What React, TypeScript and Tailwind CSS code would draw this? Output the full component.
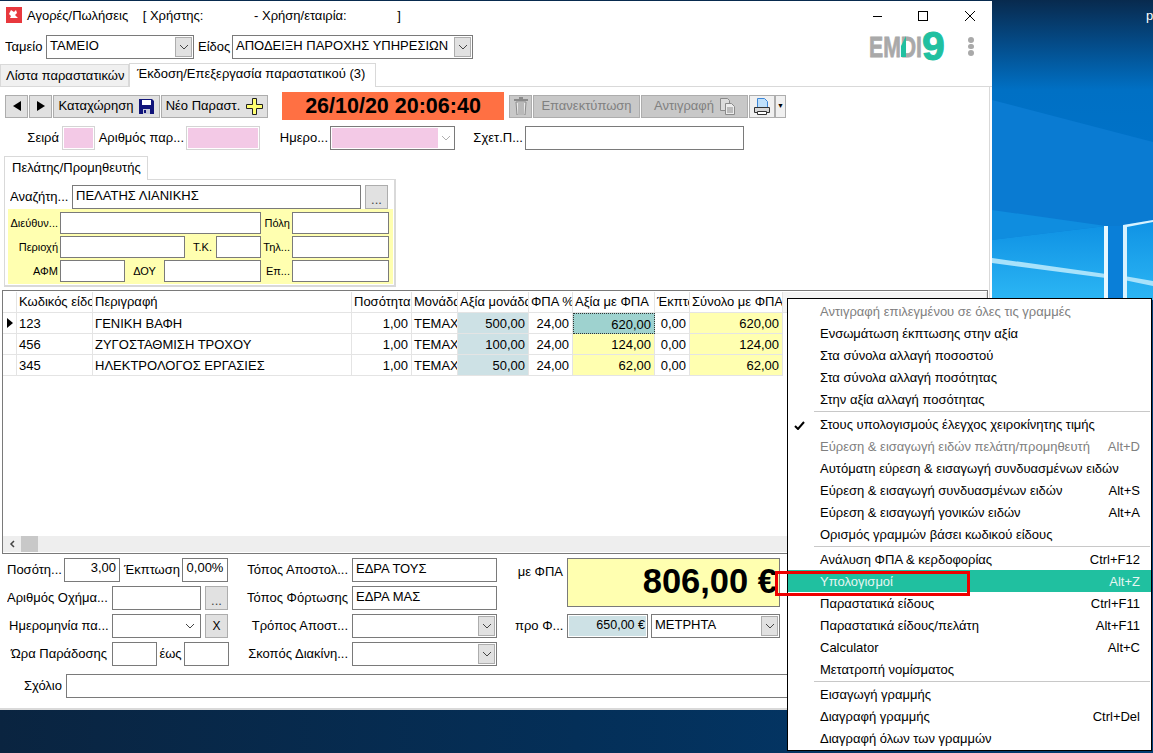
import type { ReactNode } from "react";
import clsx from "clsx";

const Wallpaper = () => (
  <svg className="absolute inset-0" width="1153" height="753" viewBox="0 0 1153 753">
    <defs>
      <linearGradient id="sky" x1="0" y1="0" x2="0" y2="1">
        <stop offset="0" stopColor="#082a4e" />
        <stop offset="0.14" stopColor="#044a86" />
        <stop offset="0.3" stopColor="#0070c4" />
        <stop offset="1" stopColor="#0078d4" />
      </linearGradient>
      <linearGradient id="pane" x1="0" y1="0" x2="0" y2="1">
        <stop offset="0" stopColor="#0f92e4" />
        <stop offset="1" stopColor="#2cb6f4" />
      </linearGradient>
      <linearGradient id="floor" x1="0" y1="0" x2="1" y2="0">
        <stop offset="0" stopColor="#0a2440" />
        <stop offset="0.5" stopColor="#042f58" />
        <stop offset="1" stopColor="#023d73" />
      </linearGradient>
    </defs>
    <rect width="1153" height="300" fill="url(#sky)" />
    <polygon points="992,100 1153,142 1153,300 992,300" fill="#0a7bd2" />
    <polygon points="992,210 1106,226 992,240" fill="#0f8ddf" />
    <polygon points="992,240 1106,226 1106,300 992,300" fill="url(#pane)" />
    <polygon points="1124,225 1153,220 1153,300 1124,300" fill="url(#pane)" />
    <polygon points="1106,300 1124,300 1124,226 1106,226" fill="#0a7fd8" />
    <polygon points="992,258 1106,274 1106,278 992,263" fill="#a8e2fb" />
    <polygon points="1124,276 1153,281 1153,286 1124,280" fill="#a8e2fb" />
    <rect x="1104" y="226" width="4" height="74" fill="#e8f8ff" />
    <polygon points="1123,225 1153,220 1153,222 1127,227 1127,300 1123,300" fill="#d7f2ff" />
    <rect y="300" width="1153" height="453" fill="url(#floor)" />
  </svg>
);

const Chevron = ({ color = "#444" }: { color?: string }) => (
  <svg width="10" height="6" viewBox="0 0 10 6" fill="none">
    <path d="M1 1l4 4 4-4" stroke={color} strokeWidth="1" />
  </svg>
);

const Field = ({ className, children }: { className?: string; children?: ReactNode }) => (
  <div
    className={clsx(
      "shrink-0 border border-[#7a7a7a] bg-white px-[3px] whitespace-nowrap overflow-hidden",
      className
    )}
  >
    {children}
  </div>
);

const Combo = ({ className, text, flat }: { className?: string; text?: string; flat?: boolean }) => (
  <div className={clsx("shrink-0 flex items-stretch border border-[#7a7a7a] bg-white h-[24px]", className)}>
    <span className="flex-1 px-[3px] leading-[20px] whitespace-nowrap overflow-hidden">{text}</span>
    {flat ? (
      <span className="w-[20px] flex items-center justify-center">
        <Chevron />
      </span>
    ) : (
      <span className="w-[17px] m-[1px] flex items-center justify-center bg-[#e1e1e1] border border-[#adadad]">
        <Chevron />
      </span>
    )}
  </div>
);

const Label = ({ className, children }: { className?: string; children: ReactNode }) => (
  <span className={clsx("shrink-0 whitespace-nowrap overflow-hidden", className)}>{children}</span>
);

const Dots = ({ className }: { className?: string }) => (
  <div
    className={clsx(
      "shrink-0 w-[23px] h-[24px] bg-[#e1e1e1] border border-[#adadad] flex items-end justify-center leading-[16px] text-[#444]",
      className
    )}
  >
    ...
  </div>
);

const Pink = ({ className }: { className?: string }) => (
  <div className={clsx("shrink-0 h-[24px] border border-[#d4d4d4] bg-white p-[1px]", className)}>
    <div className="h-full bg-[#f3c9e6]" />
  </div>
);

const ToolButton = ({ className, children }: { className?: string; children: ReactNode }) => (
  <div
    className={clsx(
      "shrink-0 h-[23px] border border-[#adadad] bg-[#e1e1e1] flex items-center justify-center whitespace-nowrap",
      className
    )}
  >
    {children}
  </div>
);

const Floppy = () => (
  <svg width="17" height="17" viewBox="0 0 17 17" className="ml-[4px]">
    <path d="M1 1h13l2 2v13H1z" fill="#10147a" />
    <rect x="4" y="2" width="9" height="5" fill="#fff" />
    <rect x="5" y="11" width="7" height="5" fill="#c6c8d8" />
    <rect x="6" y="12" width="2" height="3" fill="#10147a" />
  </svg>
);

const Plus = () => (
  <svg width="17" height="17" viewBox="0 0 17 17" className="ml-[6px]">
    <path d="M6.5.5h4v6h6v4h-6v6h-4v-6h-6v-4h6z" fill="#ffff70" stroke="#222" strokeWidth="1" />
  </svg>
);

const Triangle = ({ flip }: { flip?: boolean }) => (
  <svg width="8" height="10" viewBox="0 0 8 10" className={flip ? "rotate-180" : undefined}>
    <path d="M0 5l8-5v10z" fill="#000" />
  </svg>
);

const Trash = () => (
  <svg width="14" height="18" viewBox="0 0 14 18">
    <rect x="0" y="2" width="14" height="2" fill="#8a8a8a" />
    <rect x="5" y="0" width="4" height="2" fill="#8a8a8a" />
    <path d="M2 5h10l-1 13H3z" fill="#e8e8e8" stroke="#8a8a8a" />
    <path d="M5 6v11M7 6v11M9 6v11" stroke="#8a8a8a" />
  </svg>
);

const CopyIcon = () => (
  <svg width="15" height="17" viewBox="0 0 15 17" className="ml-[6px]" fill="#dcdcdc" stroke="#8a8a8a">
    <path d="M.5.5h7l2 2v10h-9z" />
    <path d="M5.5 5.5h6l3 3v8h-9z" fill="#ececec" />
    <path d="M7 10h6M7 12h6M7 14h6" />
  </svg>
);

const Printer = () => (
  <svg width="18" height="19" viewBox="0 0 18 19">
    <path d="M4.5 1.5h7l3 3v7h-10z" fill="#bfe0fb" stroke="#3d86d6" />
    <path d="M1.5 10.5h15v5h-15z" fill="#d8d8d8" stroke="#333" />
    <path d="M4.5 14.5h9v3h-9z" fill="#fff" stroke="#333" />
  </svg>
);

const Logo = () => (
  <svg width="80" height="30" viewBox="0 0 80 30" className="ml-[7px]" role="img" aria-label="EMDI9">
    <text
      x="0"
      y="26"
      fontFamily="'Liberation Sans', sans-serif"
      fontWeight="700"
      fontSize="29"
      fill="#a9a9a9"
      stroke="#a9a9a9"
      strokeWidth="0.8"
      textLength="53"
      lengthAdjust="spacingAndGlyphs"
    >
      EMDI
    </text>
    <polygon points="32,15 37,5 37,26 32,26" fill="#20c0a0" />
    <text
      x="53"
      y="29"
      fontFamily="'Liberation Sans', sans-serif"
      fontWeight="700"
      fontSize="41"
      fill="#20c0a0"
      stroke="#20c0a0"
      strokeWidth="1"
    >
      9
    </text>
  </svg>
);

const columns = "grid-cols-[14px_76px_259px_60px_46px_71px_44px_82px_35px_93px_1fr]";
const headers = [
  "",
  "Κωδικός είδους",
  "Περιγραφή",
  "Ποσότητα",
  "Μονάδα",
  "Αξία μονάδας",
  "ΦΠΑ %",
  "Αξία με ΦΠΑ",
  "Έκπτωση",
  "Σύνολο με ΦΠΑ",
  "",
];
const rows = [
  ["123", "ΓΕΝΙΚΗ ΒΑΦΗ", "1,00", "ΤΕΜΑΧ", "500,00", "24,00", "620,00", "0,00", "620,00"],
  ["456", "ΖΥΓΟΣΤΑΘΜΙΣΗ ΤΡΟΧΟΥ", "1,00", "ΤΕΜΑΧ", "100,00", "24,00", "124,00", "0,00", "124,00"],
  ["345", "ΗΛΕΚΤΡΟΛΟΓΟΣ ΕΡΓΑΣΙΕΣ", "1,00", "ΤΕΜΑΧ", "50,00", "24,00", "62,00", "0,00", "62,00"],
];

const cell = "h-[21px] border-r border-b border-[#e4e4e4] pl-[2px] pr-[3px] whitespace-nowrap overflow-hidden";

const menuGroups: { text: string; keys?: string; off?: boolean; check?: boolean; active?: boolean }[][] = [
  [
    { text: "Αντιγραφή επιλεγμένου σε όλες τις γραμμές", off: true },
    { text: "Ενσωμάτωση έκπτωσης στην αξία" },
    { text: "Στα σύνολα αλλαγή ποσοστού" },
    { text: "Στα σύνολα αλλαγή ποσότητας" },
    { text: "Στην αξία αλλαγή ποσότητας" },
  ],
  [
    { text: "Στους υπολογισμούς έλεγχος χειροκίνητης τιμής", check: true },
    { text: "Εύρεση & εισαγωγή ειδών πελάτη/προμηθευτή", keys: "Alt+D", off: true },
    { text: "Αυτόματη εύρεση & εισαγωγή συνδυασμένων ειδών" },
    { text: "Εύρεση & εισαγωγή συνδυασμένων ειδών", keys: "Alt+S" },
    { text: "Εύρεση & εισαγωγή γονικών ειδών", keys: "Alt+A" },
    { text: "Ορισμός γραμμών βάσει κωδικού είδους" },
  ],
  [
    { text: "Ανάλυση ΦΠΑ & κερδοφορίας", keys: "Ctrl+F12" },
    { text: "Υπολογισμοί", keys: "Alt+Z", active: true },
    { text: "Παραστατικά είδους", keys: "Ctrl+F11" },
    { text: "Παραστατικά είδους/πελάτη", keys: "Alt+F11" },
    { text: "Calculator", keys: "Alt+C" },
    { text: "Μετατροπή νομίσματος" },
  ],
  [
    { text: "Εισαγωγή γραμμής" },
    { text: "Διαγραφή γραμμής", keys: "Ctrl+Del" },
    { text: "Διαγραφή όλων των γραμμών" },
  ],
];

const ContextMenu = () => (
  <div className="absolute left-[787px] top-[298px] w-[365px] h-[453px] bg-white border border-black pt-[1px] text-[13px]">
    {menuGroups.map((group, i) => (
      <div key={i}>
        {i > 0 && (
          <div className="h-[3px] pt-[1px] ml-[26px] mr-[1px]">
            <div className="h-[1px] bg-[#c8c8c8]" />
          </div>
        )}
        {group.map((item) => (
          <div
            key={item.text}
            className={clsx(
              "h-[22px] flex items-center pt-[2px] pr-[11px]",
              item.off && "text-[#808080]",
              item.active && "bg-[#20c0a0] text-[#e6f6f1]"
            )}
          >
            <span className="w-[32px] shrink-0 flex justify-center pr-[9px]">
              {item.check && (
                <svg width="11" height="9" viewBox="0 0 11 9" fill="none">
                  <path d="M1 5l3 3 6-7" stroke="#000" strokeWidth="2" />
                </svg>
              )}
            </span>
            <span className="flex-1 whitespace-nowrap">{item.text}</span>
            {item.keys && <span>{item.keys}</span>}
          </div>
        ))}
      </div>
    ))}
  </div>
);

export default function App() {
  return (
    <div className="relative w-[1153px] h-[753px] overflow-hidden text-[13px] text-black [font-family:'Liberation_Sans',sans-serif]">
      <Wallpaper />
      <span className="absolute left-[1146px] top-[6px] text-white text-[13px]">p</span>

      <div className="absolute left-0 top-[1px] w-[992px] h-[709px] bg-white flex flex-col">
        {/* title + cash desk row */}
        <div className="flex justify-between h-[62px] shrink-0">
          <div>
            <div className="h-[34px] flex items-start pt-[6px] pl-[6px]">
              <svg width="16" height="16" viewBox="0 0 16 16">
                <rect width="16" height="16" fill="#e8383d" />
                <path d="M5 3l3 2 2-2 1 3-2 2 3 3H4l1-2-2-2z" fill="#fff" />
              </svg>
              <span className="ml-[5px] leading-[18px] whitespace-pre">
                {"Αγορές/Πωλήσεις    [ Χρήστης:              - Χρήση/εταιρία:              ]"}
              </span>
            </div>
            <div className="flex items-center pl-[5px]">
              <Label className="w-[41px]">Ταμείο</Label>
              <Combo className="w-[148px]" text="ΤΑΜΕΙΟ" />
              <Label className="w-[38px] pl-[4px]">Είδος</Label>
              <Combo className="w-[241px]" text="ΑΠΟΔΕΙΞΗ ΠΑΡΟΧΗΣ ΥΠΗΡΕΣΙΩΝ" />
            </div>
          </div>
          <div className="w-[130px]">
            <div className="h-[30px] flex items-center pl-[11px] gap-[29px]">
              <div className="w-[9px] h-[1px] bg-black" />
              <div className="w-[10px] h-[10px] border border-black ml-[7px]" />
              <svg width="12" height="12" viewBox="0 0 12 12" className="ml-[7px]">
                <path d="M1 1l10 10M11 1L1 11" stroke="#000" />
              </svg>
            </div>
            <div className="flex items-start">
              <Logo />
              <div className="ml-[19px] mt-[6px] flex flex-col gap-[1px]">
                {[0, 1, 2].map((d) => (
                  <div key={d} className="w-[5.5px] h-[5.5px] rounded-full bg-[#a9a9a9]" />
                ))}
              </div>
            </div>
          </div>
        </div>

        {/* tabs */}
        <div className="flex items-end h-[24px] shrink-0 border-b border-[#d9d9d9]">
          <div className="w-[129px] h-[22px] bg-[#f0f0f0] border border-b-0 border-[#d9d9d9] pl-[5px] leading-[22px] whitespace-nowrap">
            Λίστα παραστατικών
          </div>
          <div className="w-[247px] h-[24px] -mb-[1px] bg-white border border-b-0 border-[#d9d9d9] pl-[7px] leading-[20px] whitespace-nowrap">
            Έκδοση/Επεξεργασία παραστατικού (3)
          </div>
        </div>

        {/* tab page */}
        <div className="w-[990px] flex-1 border-r border-b-2 border-[#d9d9d9] flex flex-col">
          <div className="flex items-center h-[28px] mt-[5px] pl-[5px] shrink-0">
            <ToolButton className="w-[23px]">
              <Triangle />
            </ToolButton>
            <ToolButton className="w-[23px] ml-[1px]">
              <Triangle flip />
            </ToolButton>
            <ToolButton className="w-[107px] ml-[1px]">
              Καταχώρηση
              <Floppy />
            </ToolButton>
            <ToolButton className="w-[107px] ml-[1px]">
              Νέο Παραστ.
              <Plus />
            </ToolButton>
            <div className="w-[222px] h-[28px] ml-[14px] bg-[#ff7043] flex items-center justify-center font-bold text-[21.5px] whitespace-nowrap">
              26/10/20 20:06:40
            </div>
            <ToolButton className="w-[23px] ml-[5px] !bg-[#c8c8c8]">
              <Trash />
            </ToolButton>
            <ToolButton className="w-[107px] ml-[1px] !bg-[#c8c8c8] text-[#808080]">Επανεκτύπωση</ToolButton>
            <ToolButton className="w-[107px] ml-[1px] !bg-[#c8c8c8] text-[#808080]">
              Αντιγραφή
              <CopyIcon />
            </ToolButton>
            <ToolButton className="w-[26px] ml-[1px] !bg-[#f0f0f0]">
              <Printer />
            </ToolButton>
            <ToolButton className="w-[11px] !bg-[#f0f0f0] text-[7px]">▼</ToolButton>
          </div>

          <div className="flex items-center h-[24px] mt-[6px] shrink-0">
            <Label className="w-[60px] text-right pr-[1px]">Σειρά</Label>
            <Pink className="w-[33px] ml-[2px]" />
            <Label className="w-[91px] text-right pr-[2px]">Αριθμός παρ...</Label>
            <Pink className="w-[74px]" />
            <Label className="w-[70px] text-right pr-[2px]">Ημερο...</Label>
            <div className="w-[125px] h-[24px] border border-[#7a7a7a] bg-white p-[1px] flex items-stretch shrink-0">
              <div className="w-[106px] bg-[#f3c9e6]" />
              <span className="flex-1 flex items-center justify-center">
                <Chevron color="#b0b0b0" />
              </span>
            </div>
            <Label className="w-[70px] text-right pr-[2px]">Σχετ.Π...</Label>
            <Field className="w-[219px] h-[24px]" />
          </div>

          {/* customer panel */}
          <div className="ml-[4px] mt-[6px] w-[392px] shrink-0">
            <div className="w-[144px] h-[24px] -mb-[1px] relative bg-white border border-b-0 border-[#d9d9d9] pl-[7px] leading-[22px] whitespace-nowrap">
              Πελάτης/Προμηθευτής
            </div>
            <div className="h-[108px] border border-[#d9d9d9] border-b-2 border-r-2 pt-[5px]">
              <div className="flex items-center pl-[5px] h-[24px]">
                <Label className="w-[62px]">Αναζήτη...</Label>
                <Field className="w-[289px] h-[24px] leading-[20px]">ΠΕΛΑΤΗΣ ΛΙΑΝΙΚΗΣ</Field>
                <Dots className="ml-[4px]" />
              </div>
              <div className="ml-[3px] w-[385px] h-[75px] bg-[#ffffb0] pt-[3px] flex flex-col gap-[2px] text-[11px]">
                <div className="flex items-center h-[22px]">
                  <Label className="w-[52px] text-right pr-[2px]">Διεύθυν...</Label>
                  <Field className="w-[201px] h-[22px]" />
                  <Label className="w-[31px] text-right pr-[2px]">Πόλη</Label>
                  <Field className="w-[97px] h-[22px]" />
                </div>
                <div className="flex items-center h-[22px]">
                  <Label className="w-[52px] text-right pr-[2px]">Περιοχή</Label>
                  <Field className="w-[125px] h-[22px]" />
                  <Label className="w-[31px] text-right pr-[4px]">Τ.Κ.</Label>
                  <Field className="w-[45px] h-[22px]" />
                  <Label className="w-[31px] text-right pr-[2px]">Τηλ...</Label>
                  <Field className="w-[97px] h-[22px]" />
                </div>
                <div className="flex items-center h-[22px]">
                  <Label className="w-[52px] text-right pr-[2px]">ΑΦΜ</Label>
                  <Field className="w-[65px] h-[22px]" />
                  <Label className="w-[39px] text-center">ΔΟΥ</Label>
                  <Field className="w-[97px] h-[22px]" />
                  <Label className="w-[31px] text-right pr-[2px]">Επ...</Label>
                  <Field className="w-[97px] h-[22px]" />
                </div>
              </div>
            </div>
          </div>

          {/* lines grid */}
          <div className="ml-[2px] mt-[3px] w-[986px] h-[264px] shrink-0 border border-[#7a7a7a] flex flex-col">
            <div className="flex-1 pt-[1px] overflow-hidden">
              <div className={clsx("grid", columns)}>
                {headers.map((h, i) => (
                  <div key={i} className={clsx(cell, "leading-[20px]", i === 3 && "text-right", i === 10 && "bg-[#f4f4f4]")}>
                    {h}
                  </div>
                ))}
                {rows.map((row, r) => [
                  <div key={`m${r}`} className={clsx(cell, "!px-0 flex items-center justify-center")}>
                    {r === 0 && (
                      <svg width="6" height="10" viewBox="0 0 6 10">
                        <path d="M0 0l6 5-6 5z" fill="#000" />
                      </svg>
                    )}
                  </div>,
                  ...row.map((v, c) => (
                    <div
                      key={`${r}-${c}`}
                      className={clsx(
                        cell,
                        "leading-[21px]",
                        (c === 2 || c >= 4) && "text-right",
                        c === 4 && "bg-[#cde1e5]",
                        (c === 6 || c === 8) && "bg-[#ffffb0]",
                        c === 6 && r === 0 && "!bg-[#9ed2cf] border border-dotted !border-[#333]"
                      )}
                    >
                      {v}
                    </div>
                  )),
                  <div key={`e${r}`} />,
                ])}
              </div>
            </div>
            <div className="h-[16px] bg-[#eeeeee] flex items-center mb-[1px]">
              <span className="w-[18px] flex justify-center">
                <svg width="6" height="8" viewBox="0 0 6 8" fill="none">
                  <path d="M5 1L2 4l3 3" stroke="#444" strokeWidth="1.5" />
                </svg>
              </span>
              <div className="w-[17px] h-full bg-[#c8c8c8]" />
            </div>
          </div>

          {/* totals and shipping */}
          <div className="flex mt-[4px] shrink-0">
            <div className="ml-[7px] w-[222px] flex flex-col gap-[4px]">
              <div className="flex items-center h-[24px]">
                <Label className="w-[57px]">Ποσότη...</Label>
                <Field className="w-[56px] h-[24px] text-right leading-[18px]">3,00</Field>
                <Label className="w-[62px] text-right pr-[2px]">Έκπτωση</Label>
                <Field className="w-[46px] h-[24px] text-center !px-0 leading-[18px]">0,00%</Field>
              </div>
              <div className="flex items-center h-[24px]">
                <Label className="w-[105px]">Αριθμός Οχήμα...</Label>
                <Field className="w-[89px] h-[24px]" />
                <Dots className="ml-[4px]" />
              </div>
              <div className="flex items-center h-[24px]">
                <Label className="w-[105px] pl-[2px]">Ημερομηνία πα...</Label>
                <Combo className="w-[89px]" flat />
                <ToolButton className="w-[23px] !h-[24px] ml-[4px] text-[12px]">X</ToolButton>
              </div>
              <div className="flex items-center h-[24px]">
                <Label className="w-[105px] pl-[4px]">Ώρα Παράδοσης</Label>
                <Field className="w-[45px] h-[24px]" />
                <Label className="w-[27px] text-center">έως</Label>
                <Field className="w-[45px] h-[24px]" />
              </div>
            </div>

            <div className="ml-[17px] flex flex-col gap-[4px]">
              <div className="flex items-center h-[24px]">
                <Label className="w-[106px] text-right pr-[4px]">Τόπος Αποστολ...</Label>
                <Field className="w-[145px] h-[24px] leading-[19px]">ΕΔΡΑ ΤΟΥΣ</Field>
              </div>
              <div className="flex items-center h-[24px]">
                <Label className="w-[106px] text-right pr-[4px]">Τόπος Φόρτωσης</Label>
                <Field className="w-[145px] h-[24px] leading-[19px]">ΕΔΡΑ ΜΑΣ</Field>
              </div>
              <div className="flex items-center h-[24px]">
                <Label className="w-[106px] text-right pr-[4px]">Τρόπος Αποστ...</Label>
                <Combo className="w-[145px]" />
              </div>
              <div className="flex items-center h-[24px]">
                <Label className="w-[106px] text-right pr-[4px]">Σκοπός Διακίνη...</Label>
                <Combo className="w-[145px]" />
              </div>
            </div>

            <div className="ml-[18px]">
              <div className="flex items-start">
                <Label className="w-[52px] mt-[4px] text-right pr-[4px]">με ΦΠΑ</Label>
                <div className="w-[213px] h-[49px] border border-[#7a7a7a] bg-[#ffffb0] flex items-center justify-end pr-[2px] pb-[2px] font-bold text-[34.5px] whitespace-nowrap">
                  806,00 €
                </div>
              </div>
              <div className="flex items-center mt-[7px]">
                <Label className="w-[52px] text-right pr-[5px]">προ Φ...</Label>
                <div className="w-[81px] h-[24px] shrink-0 border border-[#7a7a7a] bg-white p-[1px]">
                  <div className="h-full bg-[#cde1e5] text-right pr-[1px] text-[12.5px] leading-[18px] whitespace-nowrap">650,00 €</div>
                </div>
                <Combo className="w-[129px] ml-[3px]" text="ΜΕΤΡΗΤΑ" />
              </div>
            </div>
          </div>

          <div className="flex items-center h-[24px] mt-[8px] shrink-0">
            <Label className="w-[62px] text-right">Σχόλιο</Label>
            <Field className="w-[920px] ml-[4px] h-[24px]" />
          </div>
        </div>
      </div>

      <ContextMenu />
      <div className="absolute left-[775px] top-[571px] w-[195px] h-[25px] border-[3px] border-[#ee0000]" />
    </div>
  );
}
